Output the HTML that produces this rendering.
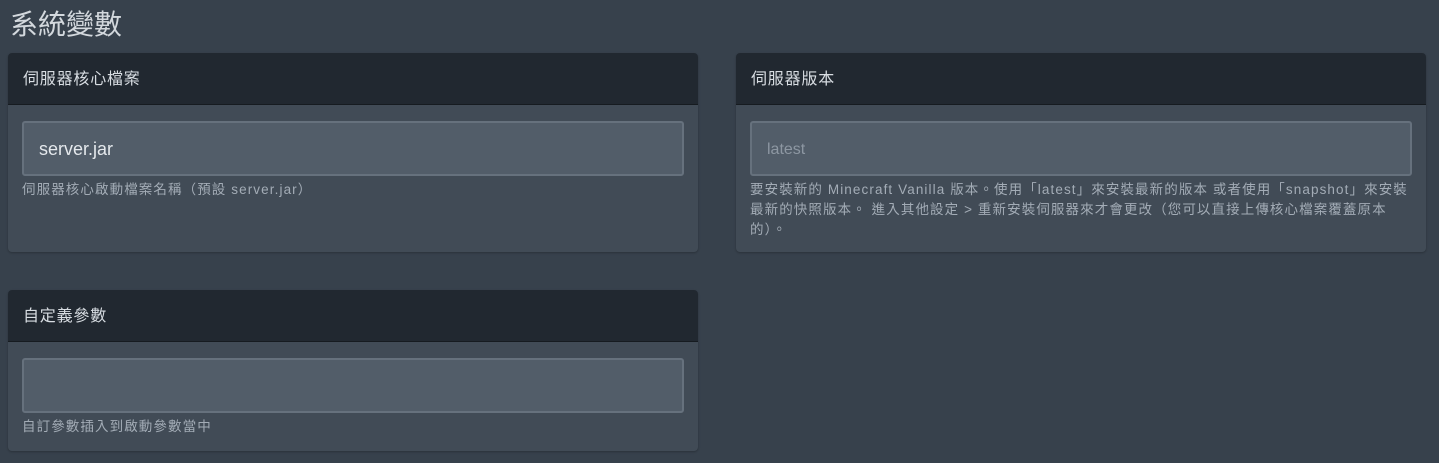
<!DOCTYPE html>
<html><head><meta charset="utf-8"><style>
*{box-sizing:border-box;margin:0;padding:0}
body{width:1439px;height:463px;background:#37414c;font-family:"Liberation Sans","Noto Sans CJK TC",sans-serif;position:relative;overflow:hidden}
h1{position:absolute;left:10px;top:7px;font-size:28px;font-weight:400;color:#d3d8dd;line-height:36px}
.card{position:absolute;background:#414b56;border-radius:4px;overflow:hidden;box-shadow:0 1px 2px rgba(0,0,0,.25)}
.hd{background:#212830;height:52px;border-bottom:1px solid #161b20;color:#d8dde2;font-size:16px;letter-spacing:0.8px;line-height:54px;padding-left:15px}
.in{position:absolute;left:14px;right:14px;top:68px;height:55px;background:#525d69;border:2px solid #66717d;border-radius:3px;font-size:18px;color:#e4e8ec;padding-left:15px;line-height:53px}
.ph{color:#8d97a2;font-size:16px}
.help{position:absolute;left:14px;right:0;top:127px;font-size:13.5px;letter-spacing:1.1px;color:#a3acb6;line-height:20px;white-space:nowrap}
</style></head><body>
<h1>系統變數</h1>
<div class="card" style="left:8px;top:53px;width:690px;height:199px">
<div class="hd">伺服器核心檔案</div>
<div class="in">server.jar</div>
<div class="help">伺服器核心啟動檔案名稱（預設 server.jar）</div>
</div>
<div class="card" style="left:736px;top:53px;width:690px;height:199px">
<div class="hd">伺服器版本</div>
<div class="in ph">latest</div>
<div class="help">要安裝新的 Minecraft Vanilla 版本。使用「latest」來安裝最新的版本 或者使用「snapshot」來安裝<br>最新的快照版本。 進入其他設定 &gt; 重新安裝伺服器來才會更改（您可以直接上傳核心檔案覆蓋原本<br>的）。</div>
</div>
<div class="card" style="left:8px;top:290px;width:690px;height:161px">
<div class="hd">自定義參數</div>
<div class="in"></div>
<div class="help">自訂參數插入到啟動參數當中</div>
</div>
</body></html>
